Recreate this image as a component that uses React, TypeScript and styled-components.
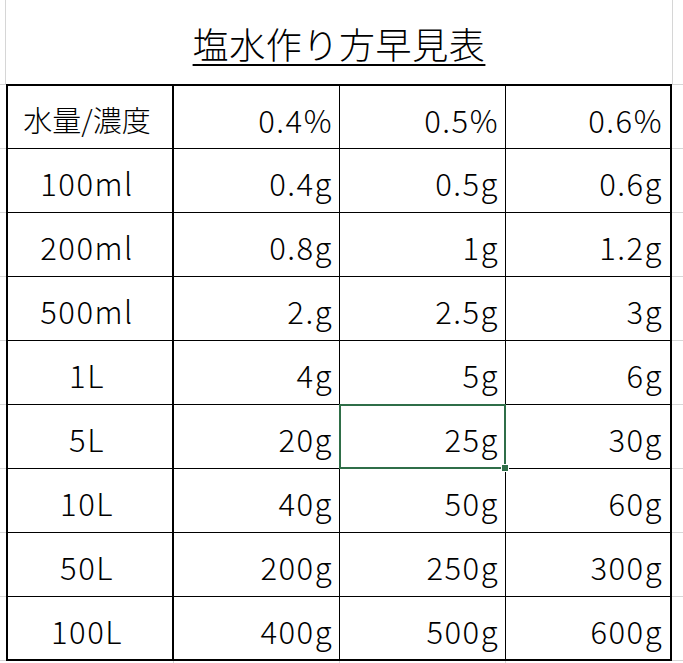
import React from 'react';
import styled, { createGlobalStyle } from 'styled-components';

const GlobalStyle = createGlobalStyle`
  html, body {
    margin: 0;
    padding: 0;
    background: #ffffff;
  }
  body {
    font-family: "Noto Sans CJK JP", "Noto Sans", sans-serif;
    color: #000;
  }
`;

const GRID = '#d6d6d6';

// シートの薄い罫線（表の外側だけに見える）
const Sheet = styled.div`
  width: 683px;
  height: 663px;
  overflow: hidden;
  display: flex;
  flex-direction: column;
  background:
    linear-gradient(to right, transparent 5px, ${GRID} 5px 6px, transparent 6px 672px, ${GRID} 672px 673px, transparent 673px) 0 0 / 100% 84px no-repeat,
    repeating-linear-gradient(to bottom, ${GRID} 0 1px, transparent 1px 64px) 0 84px / 100% 580px no-repeat,
    linear-gradient(to right, transparent 173px, ${GRID} 173px 174px, transparent 174px 339px, ${GRID} 339px 340px, transparent 340px 505px, ${GRID} 505px 506px, transparent 506px) 0 661px / 100% 2px no-repeat,
    #ffffff;
`;

const TitleRow = styled.div`
  height: 84px;
  width: 666px;
  margin-left: 6px;
  display: flex;
  align-items: center;
  justify-content: center;
  flex-shrink: 0;
`;

const Title = styled.h1`
  margin: 0;
  padding-top: 2px;
  font-size: 36px;
  font-weight: 300;
  line-height: 1;
  letter-spacing: 0.6px;
  text-decoration: underline;
  text-decoration-thickness: 1.5px;
  text-underline-offset: 5px;
`;

const Table = styled.div`
  width: 666px;
  margin-left: 6px;
  box-sizing: border-box;
  border: 2px solid #000;
  background: #fff;
  display: grid;
  grid-template-columns: 166px 166px 166px 1fr;
  grid-template-rows: 63px repeat(7, 64px) 62px;
  flex-shrink: 0;
`;

const Cell = styled.div<{ $label?: boolean; $firstCol?: boolean; $lastCol?: boolean; $lastRow?: boolean; $selected?: boolean }>`
  position: relative;
  box-sizing: border-box;
  display: flex;
  align-items: center;
  justify-content: ${(p) => (p.$label ? 'center' : 'flex-end')};
  padding: 4px ${(p) => (p.$lastCol ? '7px' : '6px')} 0 0;
  font-size: 31px;
  font-weight: 300;
  line-height: 1;
  letter-spacing: 1.5px;
  white-space: nowrap;
  border-right: ${(p) => (p.$lastCol ? 'none' : p.$firstCol ? '2px solid #000' : '1px solid #000')};
  border-bottom: ${(p) => (p.$lastRow ? 'none' : '1px solid #000')};

  ${(p) =>
    p.$selected &&
    `
    &::after {
      content: '';
      position: absolute;
      top: -1px;
      left: -1px;
      right: -1px;
      bottom: -1px;
      border: 2px solid #2f6e48;
      pointer-events: none;
    }
  `}
`;

const HeaderLabel = styled.span`
  font-size: 29px;
  letter-spacing: 0;
`;

const FillHandle = styled.span`
  position: absolute;
  right: -4px;
  bottom: -4px;
  width: 6px;
  height: 6px;
  background: #2f6e48;
  border: 1px solid #fff;
  z-index: 2;
`;

const header = ['水量/濃度', '0.4%', '0.5%', '0.6%'];

const rows: string[][] = [
  ['100ml', '0.4g', '0.5g', '0.6g'],
  ['200ml', '0.8g', '1g', '1.2g'],
  ['500ml', '2.g', '2.5g', '3g'],
  ['1L', '4g', '5g', '6g'],
  ['5L', '20g', '25g', '30g'],
  ['10L', '40g', '50g', '60g'],
  ['50L', '200g', '250g', '300g'],
  ['100L', '400g', '500g', '600g'],
];

// 選択中のセル（5L / 0.5%）
const SELECTED = { row: 5, col: 2 };

const App: React.FC = () => {
  const all = [header, ...rows];

  return (
    <>
      <GlobalStyle />
      <Sheet>
        <TitleRow>
          <Title>塩水作り方早見表</Title>
        </TitleRow>
        <Table>
          {all.map((row, r) =>
            row.map((value, c) => {
              const selected = r === SELECTED.row && c === SELECTED.col;
              return (
                <Cell
                  key={`${r}-${c}`}
                  $label={c === 0}
                  $firstCol={c === 0}
                  $lastCol={c === row.length - 1}
                  $lastRow={r === all.length - 1}
                  $selected={selected}
                >
                  {r === 0 && c === 0 ? <HeaderLabel>{value}</HeaderLabel> : value}
                  {selected && <FillHandle />}
                </Cell>
              );
            })
          )}
        </Table>
      </Sheet>
    </>
  );
};

export default App;
